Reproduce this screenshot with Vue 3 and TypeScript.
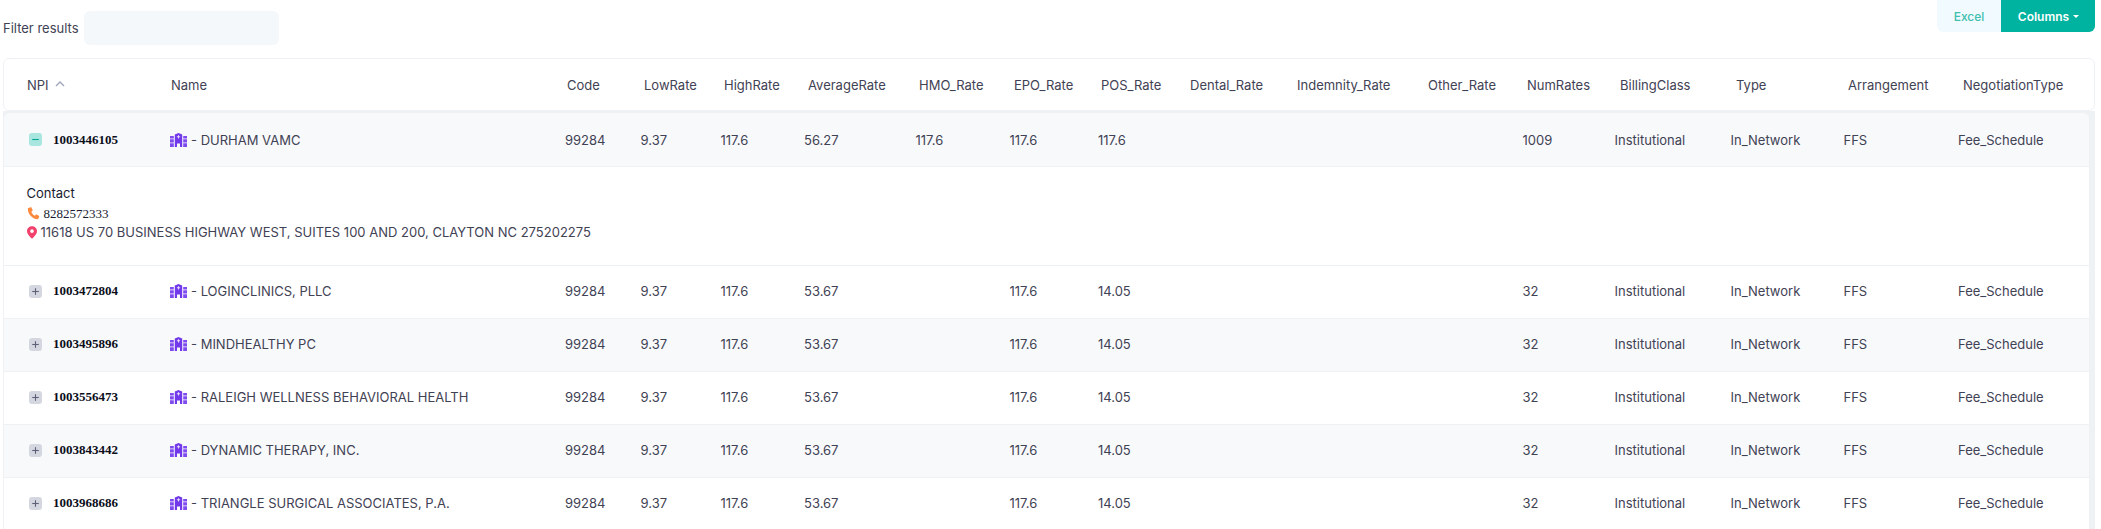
<script setup lang="ts">
interface Row {
  npi: string
  name: string
  avg: string
  hmo: string
  pos: string
  num: string
  open?: boolean
}

const headers: string[] = [
  'Name', 'Code', 'LowRate', 'HighRate', 'AverageRate', 'HMO_Rate', 'EPO_Rate', 'POS_Rate',
  'Dental_Rate', 'Indemnity_Rate', 'Other_Rate', 'NumRates', 'BillingClass', 'Type',
  'Arrangement', 'NegotiationType',
]

const rows: Row[] = [
  { npi: '1003446105', name: 'DURHAM VAMC', avg: '56.27', hmo: '117.6', pos: '117.6', num: '1009', open: true },
  { npi: '1003472804', name: 'LOGINCLINICS, PLLC', avg: '53.67', hmo: '', pos: '14.05', num: '32' },
  { npi: '1003495896', name: 'MINDHEALTHY PC', avg: '53.67', hmo: '', pos: '14.05', num: '32' },
  { npi: '1003556473', name: 'RALEIGH WELLNESS BEHAVIORAL HEALTH', avg: '53.67', hmo: '', pos: '14.05', num: '32' },
  { npi: '1003843442', name: 'DYNAMIC THERAPY, INC.', avg: '53.67', hmo: '', pos: '14.05', num: '32' },
  { npi: '1003968686', name: 'TRIANGLE SURGICAL ASSOCIATES, P.A.', avg: '53.67', hmo: '', pos: '14.05', num: '32' },
]

function rowClass(i: number, open?: boolean): string {
  if (open) return 'row shaded first'
  return i % 2 === 0 ? 'row shaded' : 'row'
}
</script>

<template>
  <div class="page">
    <div class="toolbar">
      <label class="filter">
        <span>Filter results</span>
        <span class="filter-input"></span>
      </label>
      <div class="actions">
        <span class="btn-excel">Excel</span>
        <span class="btn-columns">Columns<i class="caret"></i></span>
      </div>
    </div>

    <div class="head">
      <div class="head-npi">NPI
        <svg class="sort" viewBox="0 0 10 6" width="10" height="6"><path d="M1 5 5 1l4 4" fill="none" stroke="#a1a5b7" stroke-width="1.4" /></svg>
      </div>
      <div v-for="h in headers" :key="h" class="head-cell">{{ h }}</div>
    </div>

    <div class="body">
      <template v-for="(r, i) in rows" :key="r.npi">
        <div :class="rowClass(i, r.open)">
          <div class="npi">
            <span class="toggle" :class="{ active: r.open }">
              <svg viewBox="0 0 13 13" width="13" height="13">
                <path d="M3.2 6.500h6.600" stroke="currentColor" stroke-width="1.100" />
                <path v-if="!r.open" d="M6.500 3.200v6.600" stroke="currentColor" stroke-width="1.100" />
              </svg>
            </span>
            <b>{{ r.npi }}</b>
          </div>
          <div class="name">
            <svg class="hospital" viewBox="0 0 17 14" width="17" height="14">
              <path fill="#7f4bee" d="M0 3h3.800v2.400H0zM0 6.200h3.800v3.200H0zM0 10.200h3.800V14H0zM13.200 3H17v2.400h-3.800zM13.200 6.200H17v3.200h-3.800zM13.200 10.200H17V14h-3.800z" />
              <path fill="#7239ea" d="M4.800 1.500 8.500 0l3.700 1.500V14H10v-3.500H7V14H4.800z" />
              <path fill="#e6dcfb" d="M8 2.200h1v1.100h1.100v1H9v1.100H8V4.300H6.900v-1H8z" />
            </svg>
            <span>- {{ r.name }}</span>
          </div>
          <div>99284</div>
          <div>9.37</div>
          <div>117.6</div>
          <div>{{ r.avg }}</div>
          <div>{{ r.hmo }}</div>
          <div>117.6</div>
          <div>{{ r.pos }}</div>
          <div></div>
          <div></div>
          <div></div>
          <div>{{ r.num }}</div>
          <div>Institutional</div>
          <div>In_Network</div>
          <div>FFS</div>
          <div>Fee_Schedule</div>
        </div>
        <div v-if="r.open" class="detail">
          <div>Contact</div>
          <div class="phone">
            <svg viewBox="0 0 13 14" width="13" height="13"><path fill="#fd8a3f" d="M1 1.200 3.400.2c.4-.1.700 0 .9.400l1.200 2.600c.2.300.1.600-.2.900L4.200 5c.6 1.800 1.900 3.400 3.700 4.300l1-1c.3-.3.600-.3.900-.2l2.500 1.400c.3.200.4.500.3.900l-1 2.300c-.2.400-.5.500-.9.500C5 12.800.2 7.300.4 1.900c0-.3.200-.6.600-.7z" /></svg>
            <span>8282572333</span>
          </div>
          <div class="address">
            <svg viewBox="0 0 11 14" width="10" height="13"><path fill="#f1416c" fill-rule="evenodd" d="M5.500 0C8.500 0 11 2.300 11 5.300c0 3.400-3.300 6.500-5.500 8.700C3.300 11.800 0 8.700 0 5.300 0 2.300 2.500 0 5.500 0zm0 3.500a2 2 0 1 0 0 4 2 2 0 0 0 0-4z" /></svg>
            <span>11618 US 70 BUSINESS HIGHWAY WEST, SUITES 100 AND 200, CLAYTON NC 275202275</span>
          </div>
        </div>
      </template>
    </div>
  </div>
</template>

<style>
html, body { margin: 0; background: #fff; overflow: hidden; }
</style>

<style scoped>
.page {
  width: 2101px;
  height: 529px;
  overflow: hidden;
  font-family: Inter, "Liberation Sans", sans-serif;
  font-size: 13px;
  color: #3f4254;
  background: #fff;
}
.toolbar {
  height: 32px;
  padding: 0 6px 0 3px;
  display: flex;
  justify-content: space-between;
  margin-bottom: 26px;
}
.filter {
  display: flex;
  align-items: center;
  gap: 5px;
  padding-top: 11px;
  height: 34px;
}
.filter-input {
  width: 195px;
  height: 34px;
  background: #f5f8fa;
  border-radius: 6px;
}
.actions { display: flex; height: 32px; font-size: 12px; font-weight: 500; }
.btn-excel {
  width: 64px;
  display: flex;
  align-items: center;
  justify-content: center;
  background: #f1faff;
  color: #3fbfae;
  border-radius: 0 0 0 6px;
}
.btn-columns {
  width: 94px;
  box-sizing: border-box;
  padding-left: 1px;
  display: flex;
  align-items: center;
  justify-content: center;
  gap: 4px;
  background: #00b2a0;
  color: #fff;
  font-weight: 600;
  border-radius: 0 0 6px 0;
}
.caret {
  border-top: 3px solid #fff;
  border-left: 3px solid transparent;
  border-right: 3px solid transparent;
}
.head {
  margin: 0 6px 0 3px;
  height: 53px;
  border: 1px solid #eff2f5;
  border-radius: 6px;
  box-sizing: border-box;
  display: grid;
  grid-template-columns: 144px 396px 77px 80px 84px 111px 95px 87px 89px 107px 131px 99px 93px 116px 112px 115px 1fr;
  padding-left: 23px;
  align-items: center;
  white-space: nowrap;
}
.head-npi { display: flex; align-items: center; gap: 6px; }
.sort { margin-top: -1px; }
.body {
  margin: 0 6px 0 3px;
  padding: 2px 6px 0 0;
  background: #eff2f5;
}
.row {
  height: 53px;
  box-sizing: border-box;
  padding-bottom: 2px;
  border-bottom: 1px solid #eff2f5;
  border-left: 1px solid #eff2f5;
  background: #fff;
  display: grid;
  grid-template-columns: 144px 395px 75.500px 80px 83.500px 111.500px 94px 88.500px 88.500px 107px 131px 98px 92px 116px 113px 114.500px 1fr;
  padding-left: 22px;
  align-items: center;
  white-space: nowrap;
}
.first { height: 54px; padding-bottom: 0; border-radius: 6px 6px 0 0; }
.row.shaded { background: #f8f9fb; }
.npi { display: flex; align-items: center; gap: 11px; padding-left: 3px; }
.npi b {
  font-family: "Liberation Serif", serif;
  font-weight: 700;
  color: #0b0d1a;
}
.toggle {
  width: 13px;
  height: 13px;
  display: flex;
  border-radius: 3px;
  background: #d5d7e0;
  color: #5e6278;
}
.toggle.active { background: #a8e6df; color: #00a896; }
.name { display: flex; align-items: center; gap: 4px; }
.hospital { flex: none; }
.detail {
  height: 99px;
  box-sizing: border-box;
  border-bottom: 1px solid #eff2f5;
  border-left: 1px solid #eff2f5;
  background: #fff;
  padding: 17px 0 0 22.500px;
  line-height: 19.500px;
  color: #181c32;
}
.phone, .address { display: flex; align-items: center; }
.phone { font-family: "Liberation Serif", serif; gap: 4px; }
.address { gap: 4px; color: #3f4254; }
</style>
